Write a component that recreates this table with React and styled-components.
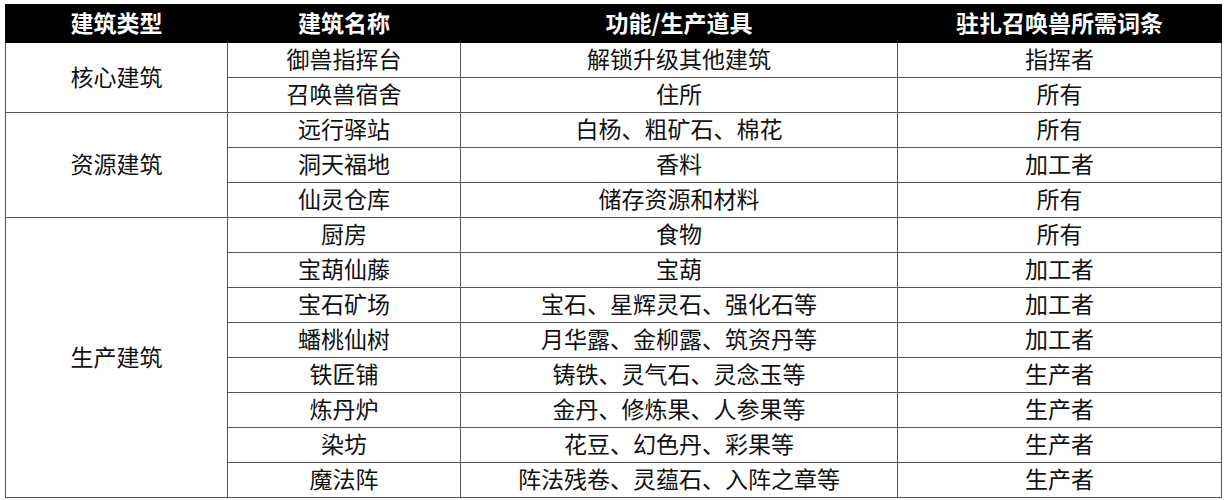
import React from "react";
import styled, { createGlobalStyle } from "styled-components";

const GlobalStyle = createGlobalStyle`
  html, body {
    margin: 0;
    padding: 0;
    background: #fff;
  }
  body {
    font-family: "Noto Sans CJK SC", "Noto Sans", sans-serif;
  }
`;

const Page = styled.div`
  width: 1225px;
  height: 500px;
  padding: 4px 0 0 5px;
  box-sizing: border-box;
  overflow: hidden;
`;

const Table = styled.table`
  border-collapse: collapse;
  table-layout: fixed;
  width: 1216px;
  font-size: 23px;
  color: #111;
  col:nth-child(1) { width: 222px; }
  col:nth-child(2) { width: 233px; }
  col:nth-child(3) { width: 437px; }
  col:nth-child(4) { width: 324px; }
`;

const HeadCell = styled.th`
  height: 35px;
  padding: 0 0 2px;
  background: #000;
  color: #fff;
  font-weight: 700;
  text-align: center;
  vertical-align: middle;
  line-height: 35px;
  border: 1px solid #000;
`;

const Cell = styled.td`
  height: 31px;
  padding: 0 0 3px;
  text-align: center;
  vertical-align: middle;
  line-height: 31px;
  white-space: nowrap;
  border: 1px solid #555;
`;

const groups = [
  {
    type: "核心建筑",
    rows: [
      ["御兽指挥台", "解锁升级其他建筑", "指挥者"],
      ["召唤兽宿舍", "住所", "所有"],
    ],
  },
  {
    type: "资源建筑",
    rows: [
      ["远行驿站", "白杨、粗矿石、棉花", "所有"],
      ["洞天福地", "香料", "加工者"],
      ["仙灵仓库", "储存资源和材料", "所有"],
    ],
  },
  {
    type: "生产建筑",
    rows: [
      ["厨房", "食物", "所有"],
      ["宝葫仙藤", "宝葫", "加工者"],
      ["宝石矿场", "宝石、星辉灵石、强化石等", "加工者"],
      ["蟠桃仙树", "月华露、金柳露、筑资丹等", "加工者"],
      ["铁匠铺", "铸铁、灵气石、灵念玉等", "生产者"],
      ["炼丹炉", "金丹、修炼果、人参果等", "生产者"],
      ["染坊", "花豆、幻色丹、彩果等", "生产者"],
      ["魔法阵", "阵法残卷、灵蕴石、入阵之章等", "生产者"],
    ],
  },
];

const headers = ["建筑类型", "建筑名称", "功能/生产道具", "驻扎召唤兽所需词条"];

export default function App() {
  return (
    <>
      <GlobalStyle />
      <Page>
        <Table>
          <colgroup>
            <col />
            <col />
            <col />
            <col />
          </colgroup>
          <thead>
            <tr>
              {headers.map((h) => (
                <HeadCell key={h}>{h}</HeadCell>
              ))}
            </tr>
          </thead>
          <tbody>
            {groups.map((g) =>
              g.rows.map((r, i) => (
                <tr key={g.type + r[0]}>
                  {i === 0 && <Cell rowSpan={g.rows.length}>{g.type}</Cell>}
                  {r.map((c, j) => (
                    <Cell key={j}>{c}</Cell>
                  ))}
                </tr>
              ))
            )}
          </tbody>
        </Table>
      </Page>
    </>
  );
}
